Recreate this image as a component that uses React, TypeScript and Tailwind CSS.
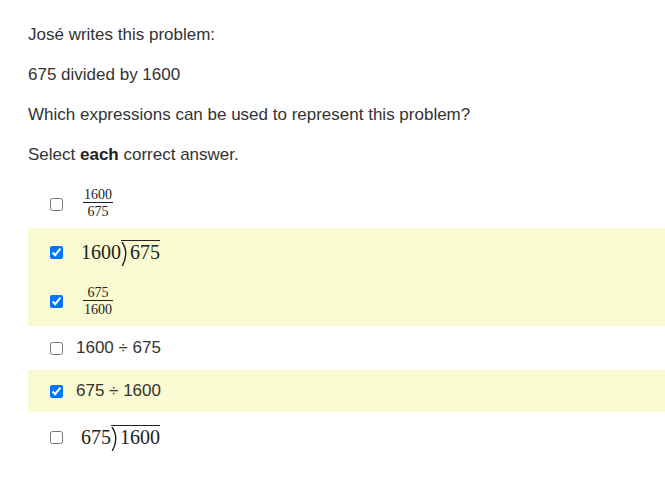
import type { ReactNode } from "react";

const sans = "font-['Liberation_Sans',Arial,sans-serif]";
const serif = "font-['Liberation_Serif','Times_New_Roman',serif]";

function Frac({ num, den }: { num: string; den: string }) {
  return (
    <span className={`-mt-[2px] inline-flex flex-col items-center text-[14px] leading-[13px] text-[#222] ${serif}`}>
      <span className="px-[1px] pb-[1px]">{num}</span>
      <span className="block h-px w-full bg-[#222]" />
      <span className="px-[1px] pt-[2px]">{den}</span>
    </span>
  );
}

function LongDiv({ divisor, dividend }: { divisor: string; dividend: string }) {
  return (
    <span className={`-mt-[3px] inline-flex items-end text-[20px] leading-[20px] text-[#222] ${serif}`}>
      <span>{divisor}</span>
      <span className="inline-flex items-end border-t border-[#222] pt-[1px]">
        <svg width="8" height="24" viewBox="0 0 8 24" className="-mb-[4px] mr-[1px]">
          <path d="M1 0 Q 8.5 11 1.2 24" fill="none" stroke="#222" strokeWidth="1.4" />
        </svg>
        <span>{dividend}</span>
      </span>
    </span>
  );
}

type Choice = { content: ReactNode; checked: boolean; h: string; indent: string };

const CHOICES: Choice[] = [
  { content: <Frac num="1600" den="675" />, checked: false, h: "h-[48px]", indent: "ml-[20px]" },
  { content: <LongDiv divisor="1600" dividend="675" />, checked: true, h: "h-[49px]", indent: "ml-[18px]" },
  { content: <Frac num="675" den="1600" />, checked: true, h: "h-[49px]", indent: "ml-[20px]" },
  { content: "1600 ÷ 675", checked: false, h: "h-[44px]", indent: "ml-[13px]" },
  { content: "675 ÷ 1600", checked: true, h: "h-[42px]", indent: "ml-[13px]" },
  { content: <LongDiv divisor="675" dividend="1600" />, checked: false, h: "h-[50px]", indent: "ml-[18px]" },
];

export default function App() {
  return (
    <div className={`min-h-[482px] w-[665px] bg-white pl-[28px] pt-[23px] text-[17px] leading-[24px] text-[#333] ${sans}`}>
      <div className="space-y-[16px]">
        <p>José writes this problem:</p>
        <p>675 divided by 1600</p>
        <p>Which expressions can be used to represent this problem?</p>
        <p>
          Select <b className="font-bold text-[#222]">each</b> correct answer.
        </p>
      </div>

      <div className="mt-[13px]">
        {CHOICES.map((c, i) => (
          <label
            key={i}
            className={`flex items-center pl-[22px] ${c.h} ${c.checked ? "bg-[#fafad2]" : ""}`}
          >
            <input
              type="checkbox"
              defaultChecked={c.checked}
              className="m-0 h-[13px] w-[13px] shrink-0 accent-[#0075ff]"
            />
            <span className={`flex ${c.indent}`}>{c.content}</span>
          </label>
        ))}
      </div>
    </div>
  );
}
